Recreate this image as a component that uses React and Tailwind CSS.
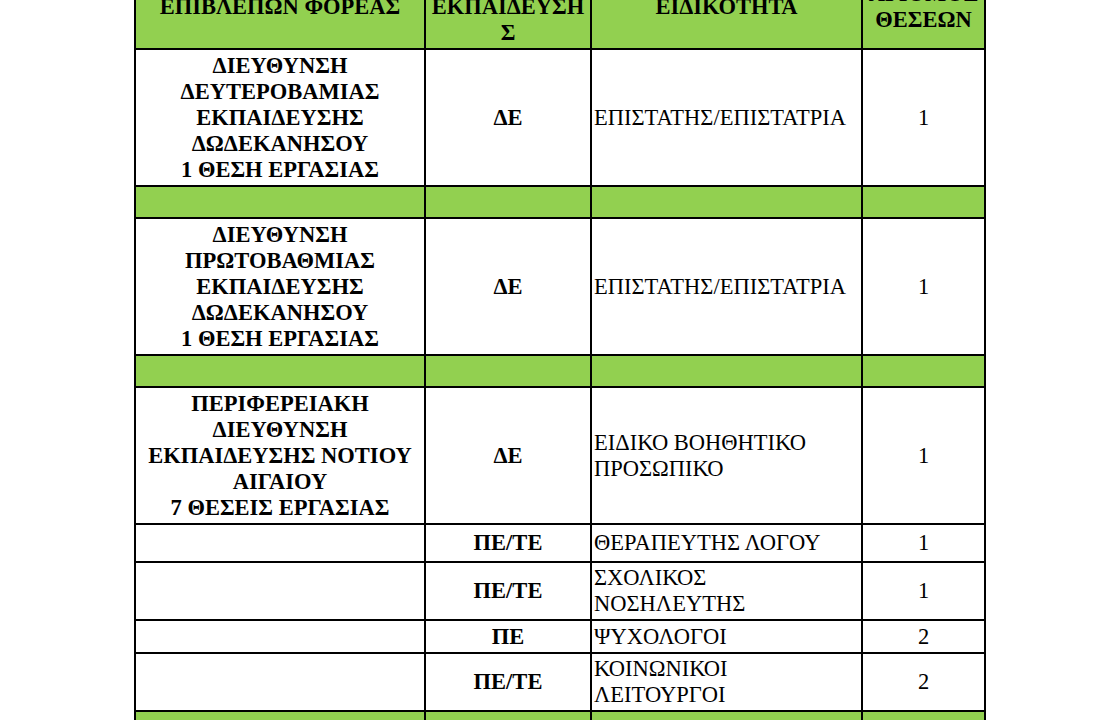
const cell = 'border-2 border-black p-0 align-middle';

function Spacer() {
  return (
    <tr className="h-[32px] bg-[#92d050]">
      <td className={cell} />
      <td className={cell} />
      <td className={cell} />
      <td className={cell} />
    </tr>
  );
}

function Row({ h, org, level, spec, count }) {
  return (
    <tr style={{ height: h }}>
      <td className={`${cell} text-center font-bold`}>
        {org ? org.map((l) => <div key={l}>{l}</div>) : null}
      </td>
      <td className={`${cell} text-center font-bold`}>{level}</td>
      <td className={`${cell} pl-[2px] text-left`}>
        {spec.map((l) => (
          <div key={l} className="whitespace-nowrap">
            {l}
          </div>
        ))}
      </td>
      <td className={`${cell} text-center`}>{count}</td>
    </tr>
  );
}

export default function App() {
  return (
    <div className="min-h-[720px] overflow-hidden bg-white">
      <table
        className="mx-auto mt-[-37px] w-[850px] table-fixed border-collapse text-[22.5px] leading-[26px] text-black"
        style={{ fontFamily: '"Liberation Serif", "Times New Roman", serif' }}
      >
        <colgroup>
          <col className="w-[290px]" />
          <col className="w-[166px]" />
          <col className="w-[271px]" />
          <col className="w-[123px]" />
        </colgroup>
        <thead>
          <tr className="h-[85px] bg-[#92d050] font-bold">
            <td className={`${cell} text-center`}>ΕΠΙΒΛΕΠΩΝ ΦΟΡΕΑΣ</td>
            <td className={`${cell} text-center`}>
              <div>ΕΠΙΠΕΔΟ</div>
              <div className="whitespace-nowrap">ΕΚΠΑΙΔΕΥΣΗ</div>
              <div>Σ</div>
            </td>
            <td className={`${cell} text-center`}>ΕΙΔΙΚΟΤΗΤΑ</td>
            <td className={`${cell} text-center`}>
              <div>ΑΡΙΘΜΟΣ</div>
              <div>ΘΕΣΕΩΝ</div>
            </td>
          </tr>
        </thead>
        <tbody>
          <Row
            h={137}
            org={['ΔΙΕΥΘΥΝΣΗ', 'ΔΕΥΤΕΡΟΒΑΜΙΑΣ', 'ΕΚΠΑΙΔΕΥΣΗΣ', 'ΔΩΔΕΚΑΝΗΣΟΥ', '1 ΘΕΣΗ ΕΡΓΑΣΙΑΣ']}
            level="ΔΕ"
            spec={['ΕΠΙΣΤΑΤΗΣ/ΕΠΙΣΤΑΤΡΙΑ']}
            count="1"
          />
          <Spacer />
          <Row
            h={137}
            org={['ΔΙΕΥΘΥΝΣΗ', 'ΠΡΩΤΟΒΑΘΜΙΑΣ', 'ΕΚΠΑΙΔΕΥΣΗΣ', 'ΔΩΔΕΚΑΝΗΣΟΥ', '1 ΘΕΣΗ ΕΡΓΑΣΙΑΣ']}
            level="ΔΕ"
            spec={['ΕΠΙΣΤΑΤΗΣ/ΕΠΙΣΤΑΤΡΙΑ']}
            count="1"
          />
          <Spacer />
          <Row
            h={137}
            org={['ΠΕΡΙΦΕΡΕΙΑΚΗ', 'ΔΙΕΥΘΥΝΣΗ', 'ΕΚΠΑΙΔΕΥΣΗΣ ΝΟΤΙΟΥ', 'ΑΙΓΑΙΟΥ', '7 ΘΕΣΕΙΣ ΕΡΓΑΣΙΑΣ']}
            level="ΔΕ"
            spec={['ΕΙΔΙΚΟ ΒΟΗΘΗΤΙΚΟ', 'ΠΡΟΣΩΠΙΚΟ']}
            count="1"
          />
          <Row h={38} level="ΠΕ/ΤΕ" spec={['ΘΕΡΑΠΕΥΤΗΣ ΛΟΓΟΥ']} count="1" />
          <Row h={58} level="ΠΕ/ΤΕ" spec={['ΣΧΟΛΙΚΟΣ', 'ΝΟΣΗΛΕΥΤΗΣ']} count="1" />
          <Row h={33} level="ΠΕ" spec={['ΨΥΧΟΛΟΓΟΙ']} count="2" />
          <Row h={58} level="ΠΕ/ΤΕ" spec={['ΚΟΙΝΩΝΙΚΟΙ', 'ΛΕΙΤΟΥΡΓΟΙ']} count="2" />
          <Spacer />
        </tbody>
      </table>
    </div>
  );
}
